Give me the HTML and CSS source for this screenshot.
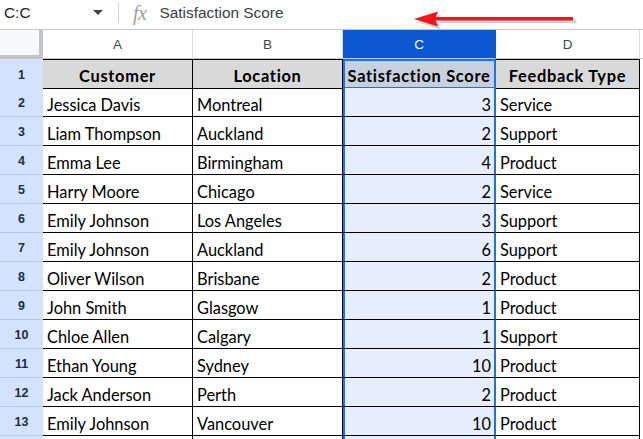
FILE: index.html
```html
<!DOCTYPE html>
<html>
<head>
<meta charset="utf-8">
<link rel="stylesheet" href="styles.css">
</head>
<body>
<div class="topbar">
  <div class="namebox">C:C</div>
  <div class="caret"></div>
  <div class="sep"></div>
  <div class="fx">fx</div>
  <div class="formula">Satisfaction Score</div>
  <svg class="arrow" width="180" height="30" viewBox="0 0 180 30">
    <g transform="translate(-400,0)">
      <path d="M438 19.5 L575 19.5" stroke="#b8b8b8" stroke-width="3.5" opacity="0.6" transform="translate(1.5,2)"/>
      <polygon points="415,20 439,13 436,20 439,27.5" fill="#b8b8b8" opacity="0.6" transform="translate(1.5,2)"/>
      <path d="M434 18.7 L573 18.7" stroke="#f0141c" stroke-width="3.6"/>
      <polygon points="414,19 438,11.5 435,19 438,26.5" fill="#f0141c"/>
    </g>
  </svg>
</div>
<div class="sheet">
  <div class="corner"></div>
  <div class="colhead">A</div>
  <div class="colhead">B</div>
  <div class="colhead sel">C</div>
  <div class="colhead">D</div>
  <div class="colhead fill"></div>

  <div class="rowhead first">1</div>
  <div class="cell hdr first">Customer</div>
  <div class="cell hdr first">Location</div>
  <div class="cell hdr first csel active">Satisfaction Score</div>
  <div class="cell hdr first">Feedback Type</div>
  <div class="filler first"></div>
</div>
<div class="sheet" id="rows"></div>
<script src="app.js"></script>
</body>
</html>
```
FILE: app.js
```js
const data = [
  ["Jessica Davis","Montreal",3,"Service"],
  ["Liam Thompson","Auckland",2,"Support"],
  ["Emma Lee","Birmingham",4,"Product"],
  ["Harry Moore","Chicago",2,"Service"],
  ["Emily Johnson","Los Angeles",3,"Support"],
  ["Emily Johnson","Auckland",6,"Support"],
  ["Oliver Wilson","Brisbane",2,"Product"],
  ["John Smith","Glasgow",1,"Product"],
  ["Chloe Allen","Calgary",1,"Support"],
  ["Ethan Young","Sydney",10,"Product"],
  ["Jack Anderson","Perth",2,"Product"],
  ["Emily Johnson","Vancouver",10,"Product"],
  ["","","",""]
];
const root = document.getElementById("rows");
data.forEach((r, i) => {
  const add = (cls, txt) => {
    const d = document.createElement("div");
    d.className = cls;
    d.textContent = txt;
    root.appendChild(d);
  };
  add("rowhead", i < 12 ? String(i + 2) : "");
  add("cell", r[0]);
  add("cell", r[1]);
  add("cell num csel", r[2]);
  add("cell", r[3]);
  add("filler", "");
});
```
FILE: styles.css
```css
html, body {
  margin: 0;
  padding: 0;
  background: #fff;
  overflow: hidden;
}
body {
  width: 643px;
  height: 439px;
  font-family: Lato, "Liberation Sans", sans-serif;
}
.topbar {
  position: relative;
  height: 29px;
  border-bottom: 1px solid #c7c7c7;
  display: flex;
  align-items: center;
  box-sizing: content-box;
}
.namebox {
  font-family: "Liberation Sans", Arial, sans-serif;
  font-size: 15.4px;
  color: #1f1f1f;
  margin-left: 4px;
  width: 89px;
  margin-top: -4px;
}
.caret {
  width: 0;
  height: 0;
  border-left: 5px solid transparent;
  border-right: 5px solid transparent;
  border-top: 5px solid #444;
  margin-top: -4px;
}
.sep {
  width: 1px;
  height: 20px;
  background: #d0d0d0;
  margin-left: 15px;
  margin-top: -4px;
}
.fx {
  font-family: "Liberation Serif", serif;
  font-style: italic;
  font-size: 20px;
  line-height: 22px;
  color: #a0a0a0;
  margin-left: 14px;
  margin-top: -4px;
  padding-right: 2px;
  letter-spacing: -0.5px;
}
.formula {
  font-family: "Liberation Sans", Arial, sans-serif;
  font-size: 15.4px;
  color: #3c4043;
  margin-left: 11px;
  margin-top: -4px;
}
.arrow {
  position: absolute;
  left: 400px;
  top: 0;
}
.sheet {
  display: grid;
  grid-template-columns: 43px 150px 150px 153px 144px 3px;
  grid-auto-rows: 29px;
}
.sheet > div {
  box-sizing: border-box;
}
.corner {
  background: #f8f9fa;
  border-right: 4px solid #c4c4c4;
  border-bottom: 4px solid #c4c4c4;
}
.colhead {
  font-family: "Liberation Sans", Arial, sans-serif;
  font-size: 13.5px;
  color: #444;
  display: flex;
  align-items: center;
  justify-content: center;
  border-right: 1px solid #dadce0;
  border-bottom: 1px solid #c4c7c5;
  padding-top: 1px;
}
.colhead.sel {
  background: #0b57d0;
  color: #fff;
  border-right-color: #0b57d0;
}
.colhead.fill {
  border-right: none;
}
.rowhead {
  background: #d3e3fd;
  font-family: "Liberation Sans", Arial, sans-serif;
  font-weight: bold;
  font-size: 12.5px;
  color: #1f2a44;
  display: flex;
  align-items: center;
  justify-content: center;
  border-bottom: 1px solid #bcc8dc;
  padding-top: 2px;
}
.rowhead.first {
  height: 30px;
}
.cell {
  font-size: 16.4px;
  color: #000;
  display: flex;
  align-items: center;
  padding: 4px 3px 0 4px;
  border-right: 1px solid #000;
  border-bottom: 1px solid #000;
  white-space: nowrap;
  overflow: hidden;
}
.cell.first {
  border-top: 1px solid #000;
  height: 30px;
}
.cell.hdr {
  background: #d9d9d9;
  font-weight: bold;
  justify-content: center;
  letter-spacing: 0.7px;
  padding: 2px 0 0 0;
}
.cell.num {
  justify-content: flex-end;
  padding-right: 4px;
}
.cell.csel {
  background: #e6eefc;
  border-right-color: #1a73e8;
  box-shadow: inset 2px 0 #1a73e8, inset -1px 0 #1a73e8;
}
.cell.hdr.csel.active {
  background: #c8d0dd;
  border-top-color: #1a73e8;
  box-shadow: inset 2px 0 #1a73e8, inset -1px 0 #1a73e8, inset 0 1px #1a73e8, inset 0 -1px #1a73e8;
  border-bottom-color: #1a73e8;
}
.filler {
  background: #fff;
}
.filler.first {
  height: 30px;
}
```
